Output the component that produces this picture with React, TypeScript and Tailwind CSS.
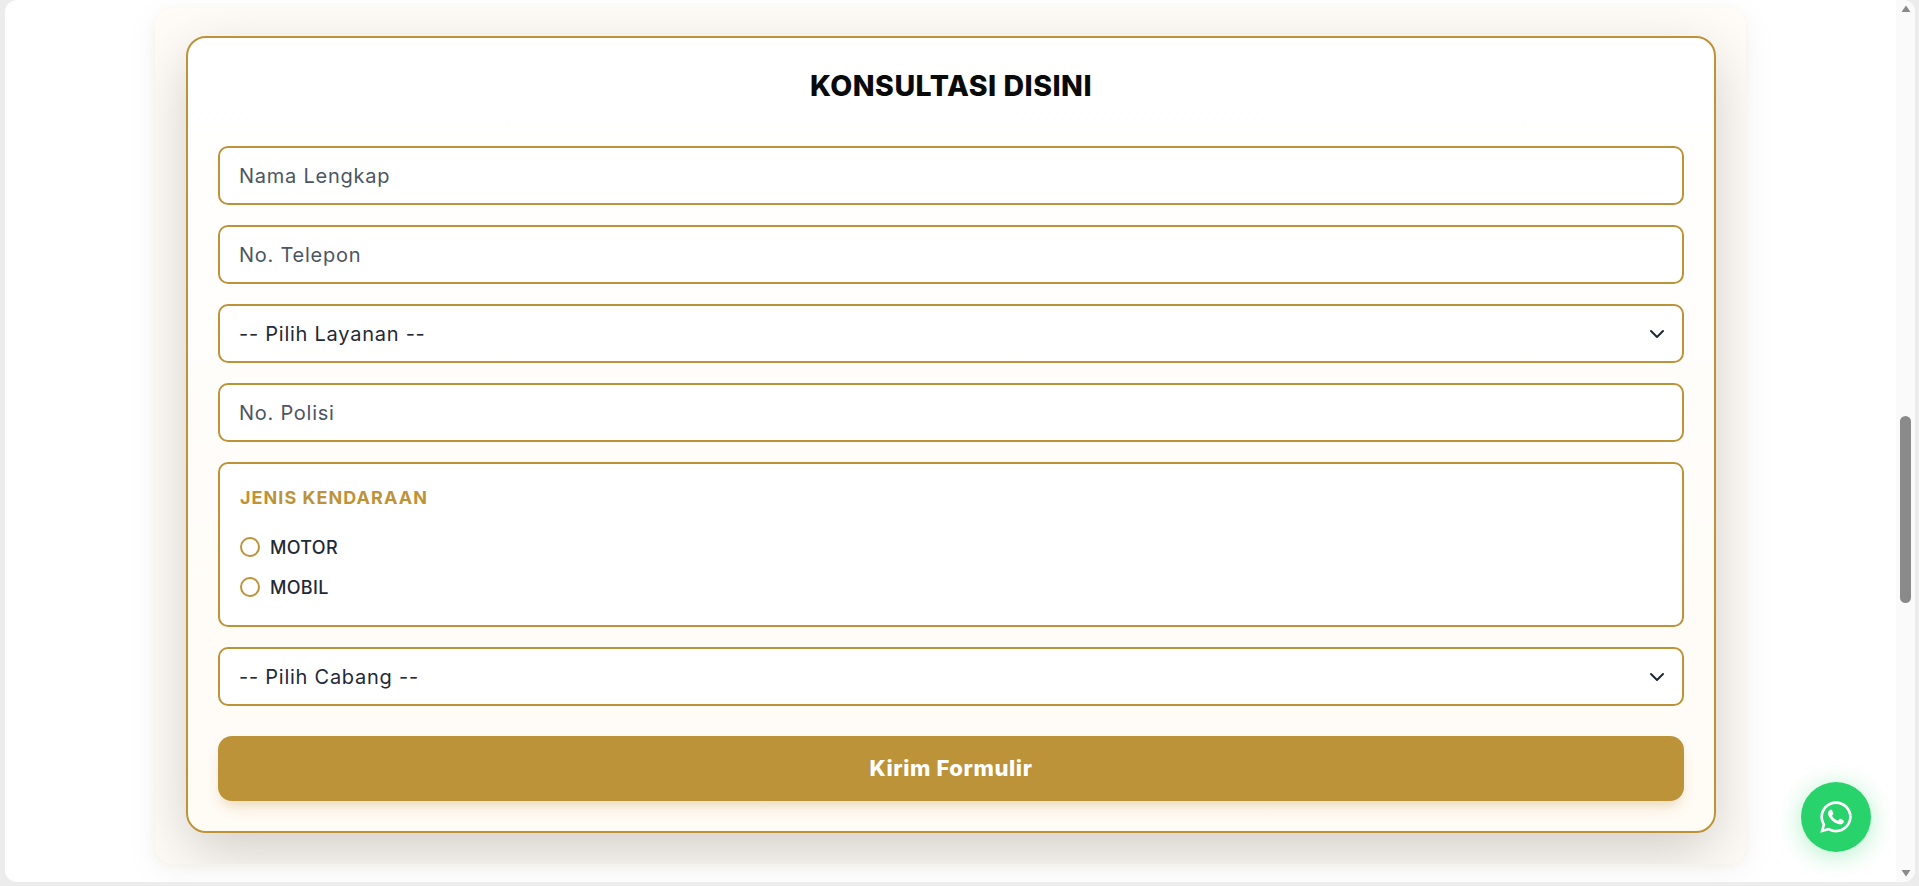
import { ChevronDown } from "lucide-react";
import { FaWhatsapp } from "react-icons/fa";

const fieldBox =
  "h-[59px] w-full rounded-[10px] border-2 border-[#bd9339] bg-white pl-[19px] pt-[1px] flex items-center text-[20px] tracking-[0.75px]";

function TextField({ label }: { label: string }) {
  return (
    <div className={fieldBox}>
      <span className="text-[#4b5563]">{label}</span>
    </div>
  );
}

function SelectField({ label }: { label: string }) {
  return (
    <div className={`${fieldBox} justify-between pr-[13px]`}>
      <span className="text-[#1f2937]">{label}</span>
      <ChevronDown className="w-6 h-6 text-[#1f2937]" strokeWidth={2} />
    </div>
  );
}

function Radio({ label }: { label: string }) {
  return (
    <div className="flex items-center gap-[10px] h-[20px]">
      <span className="w-5 h-5 rounded-full border-2 border-[#bd9339] bg-white" />
      <span className="text-[18px] font-medium tracking-[0.3px] text-[#1f2937]">{label}</span>
    </div>
  );
}

function Scrollbar() {
  return (
    <div className="w-[19px] bg-[#fafafa] flex flex-col items-center justify-between py-[5px] shrink-0">
      <svg width="10" height="8" viewBox="0 0 10 8">
        <path d="M5 0.5 L9.5 7 L0.5 7 Z" fill="#8a8a8a" />
      </svg>
      <div className="flex-1 w-full flex flex-col items-center pt-[403px]">
        <div className="w-[11px] h-[187px] rounded-full bg-[#8a8a8a]" />
      </div>
      <svg width="10" height="8" viewBox="0 0 10 8">
        <path d="M0.5 1 L9.5 1 L5 7.5 Z" fill="#8a8a8a" />
      </svg>
    </div>
  );
}

export default function App() {
  return (
    <div
      className="h-screen w-full overflow-hidden bg-[#ececec] pl-[5px] pr-[4px] pb-[4px]"
      style={{ fontFamily: "Inter, 'Noto Sans', sans-serif" }}
    >
      <div className="relative h-full flex bg-white rounded-[12px] overflow-hidden">
        <main className="flex-1 min-w-0 px-[150px] pt-[8px]">
          <div className="h-[856px] rounded-[18px] overflow-hidden bg-[#fffcf7] pl-[31px] pr-[30px] pt-[28px] shadow-[0_8px_36px_rgba(0,0,0,0.05),0_2px_8px_rgba(189,147,57,0.08)]">
            <form className="h-[797px] rounded-[20px] border-2 border-[#bd9339] bg-gradient-to-b from-white to-[#fffbf5] px-[30px] pt-[30px] shadow-[0_20px_60px_rgba(0,0,0,0.18)]">
              <h2 className="text-center text-[28.5px] leading-[36px] font-extrabold tracking-[0.5px] text-[#0a0a0a] mb-[42px]">
                KONSULTASI DISINI
              </h2>
              <div className="flex flex-col gap-[20px]">
                <TextField label="Nama Lengkap" />
                <TextField label="No. Telepon" />
                <SelectField label="-- Pilih Layanan --" />
                <TextField label="No. Polisi" />
                <div className="h-[165px] rounded-[10px] border-2 border-[#bd9339] bg-white px-[20px] pt-[20px]">
                  <p className="text-[18px] leading-[28px] font-bold tracking-[1.05px] text-[#bd9339] mb-[25px]">
                    JENIS KENDARAAN
                  </p>
                  <div className="flex flex-col gap-[20px]">
                    <Radio label="MOTOR" />
                    <Radio label="MOBIL" />
                  </div>
                </div>
                <SelectField label="-- Pilih Cabang --" />
              </div>
              <button
                type="button"
                className="mt-[30px] h-[65px] w-full rounded-[14px] bg-[#bd9339] text-white text-[22px] font-extrabold tracking-[0.6px] shadow-[0_8px_14px_-4px_rgba(189,147,57,0.35)]"
              >
                Kirim Formulir
              </button>
            </form>
          </div>
        </main>
        <Scrollbar />
        <a className="absolute left-[1796px] top-[782px] w-[70px] h-[70px] rounded-full bg-[#29d36b] flex items-center justify-center shadow-[0_4px_24px_rgba(37,211,102,0.35)]">
          <FaWhatsapp className="w-[36px] h-[36px] text-white" />
        </a>
      </div>
    </div>
  );
}
